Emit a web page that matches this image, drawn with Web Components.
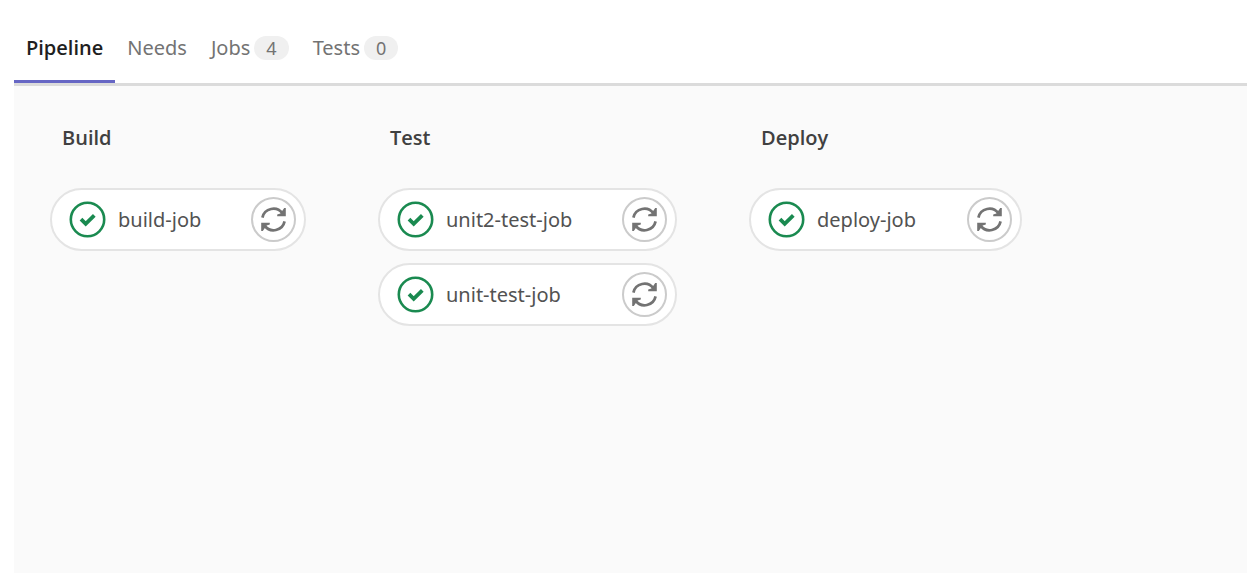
<!DOCTYPE html>
<html lang="en">
<head>
<meta charset="utf-8">
<title>Pipeline</title>
<style>
  html, body { margin: 0; min-height: 100vh; background: #fff; }
  body { font: 20px/28px "Noto Sans", "Open Sans", sans-serif; color: #404040; display: flex; }
</style>
</head>
<body>
<pipeline-page></pipeline-page>

<template id="page-tpl">
  <style>
    :host { flex: 1; min-width: 0; display: flex; flex-direction: column; padding: 12px 0 0 14px; box-sizing: border-box; }
    nav { display: flex; border-bottom: 3px solid #dbdbdb; }
    main { flex: 1; display: flex; align-items: flex-start; gap: 72px; padding: 36px; background: #fafafa; }
  </style>
  <nav aria-label="Pipeline views">
    <tab-link active>Pipeline</tab-link>
    <tab-link>Needs</tab-link>
    <tab-link count="4">Jobs</tab-link>
    <tab-link count="0">Tests</tab-link>
  </nav>
  <main>
    <pipeline-stage name="Build" style="--stage-width: 256px">
      <job-pill>build-job</job-pill>
    </pipeline-stage>
    <pipeline-stage name="Test" style="--stage-width: 299px">
      <job-pill>unit2-test-job</job-pill>
      <job-pill>unit-test-job</job-pill>
    </pipeline-stage>
    <pipeline-stage name="Deploy" style="--stage-width: 273px">
      <job-pill>deploy-job</job-pill>
    </pipeline-stage>
  </main>
</template>

<template id="tab-tpl">
  <style>
    :host { display: block; }
    a { display: flex; align-items: center; gap: 4px; height: 71px; padding: 0 12px; box-sizing: border-box; color: #737373; text-decoration: none; white-space: nowrap; }
    :host([active]) a { color: #1f1f1f; font-family: "Open Sans", sans-serif; font-weight: 600; box-shadow: inset 0 -3px #6666c4; }
    .count { display: block; padding: 0 12px; border-radius: 12px; background: #f0f0f0; font-size: 18px; line-height: 24px; }
    .count[hidden] { display: none; }
  </style>
  <a href="#"><slot></slot><span class="count" hidden></span></a>
</template>

<template id="stage-tpl">
  <style>
    :host { display: block; flex: 0 0 var(--stage-width); }
    h2 { margin: 0 12px 34px; font: 600 20px/32px "Open Sans", sans-serif; color: #404040; }
    .jobs { display: flex; flex-direction: column; gap: 12px; }
  </style>
  <h2></h2>
  <div class="jobs"><slot></slot></div>
</template>

<template id="job-tpl">
  <style>
    :host { display: flex; align-items: center; height: 63px; padding: 0 8px 0 17px; box-sizing: border-box; border: 2px solid #e4e4e4; border-radius: 32px; background: #fff; }
    a { display: flex; align-items: center; gap: 12px; color: #525252; text-decoration: none; white-space: nowrap; }
    svg { display: block; flex: none; }
    button { display: grid; place-items: center; width: 45px; height: 45px; margin: 0 0 0 auto; padding: 0; border: 2px solid #cbcbcb; border-radius: 50%; background: #fff; color: #737373; cursor: pointer; }
  </style>
  <a href="#">
    <svg width="37" height="37" viewBox="0 0 37 37" fill="none" stroke="#1a8a50" aria-hidden="true">
      <circle cx="18.5" cy="18.5" r="16.7" stroke-width="2.6"/>
      <path d="M12 18.2 L16.7 22.8 L25.3 14.4" stroke-width="3.8"/>
    </svg>
    <slot></slot>
  </a>
  <button type="button" aria-label="Retry">
    <svg width="27" height="27" viewBox="0 0 27 27" fill="none" stroke="currentColor" stroke-width="2.7" aria-hidden="true">
      <path d="M2.4 11.6 A11.2 11.2 0 0 1 22.4 7.4 M24.6 15.4 A11.2 11.2 0 0 1 4.6 19.6"/>
      <path d="M25.8 2 V10.2 H17.2 V8.6 L20.4 7.6 L24.2 2Z M1.2 25 V16.8 H9.8 V18.4 L6.6 19.4 L2.8 25Z" fill="currentColor" stroke="none"/>
    </svg>
  </button>
</template>

<script>
  class TemplateElement extends HTMLElement {
    constructor() {
      super();
      this.attachShadow({ mode: "open" })
        .append(document.getElementById(this.constructor.template).content.cloneNode(true));
    }
  }

  class TabLink extends TemplateElement {
    static template = "tab-tpl";
    connectedCallback() {
      const count = this.shadowRoot.querySelector(".count");
      count.hidden = !this.hasAttribute("count");
      count.textContent = this.getAttribute("count") ?? "";
      if (this.hasAttribute("active")) this.shadowRoot.querySelector("a").setAttribute("aria-current", "page");
    }
  }

  class JobPill extends TemplateElement {
    static template = "job-tpl";
    connectedCallback() {
      this.shadowRoot.querySelector("button").setAttribute("aria-label", "Retry " + this.textContent);
    }
  }

  class PipelineStage extends TemplateElement {
    static template = "stage-tpl";
    connectedCallback() {
      this.shadowRoot.querySelector("h2").textContent = this.getAttribute("name");
    }
  }

  class PipelinePage extends TemplateElement {
    static template = "page-tpl";
  }

  customElements.define("tab-link", TabLink);
  customElements.define("job-pill", JobPill);
  customElements.define("pipeline-stage", PipelineStage);
  customElements.define("pipeline-page", PipelinePage);
</script>
</body>
</html>
